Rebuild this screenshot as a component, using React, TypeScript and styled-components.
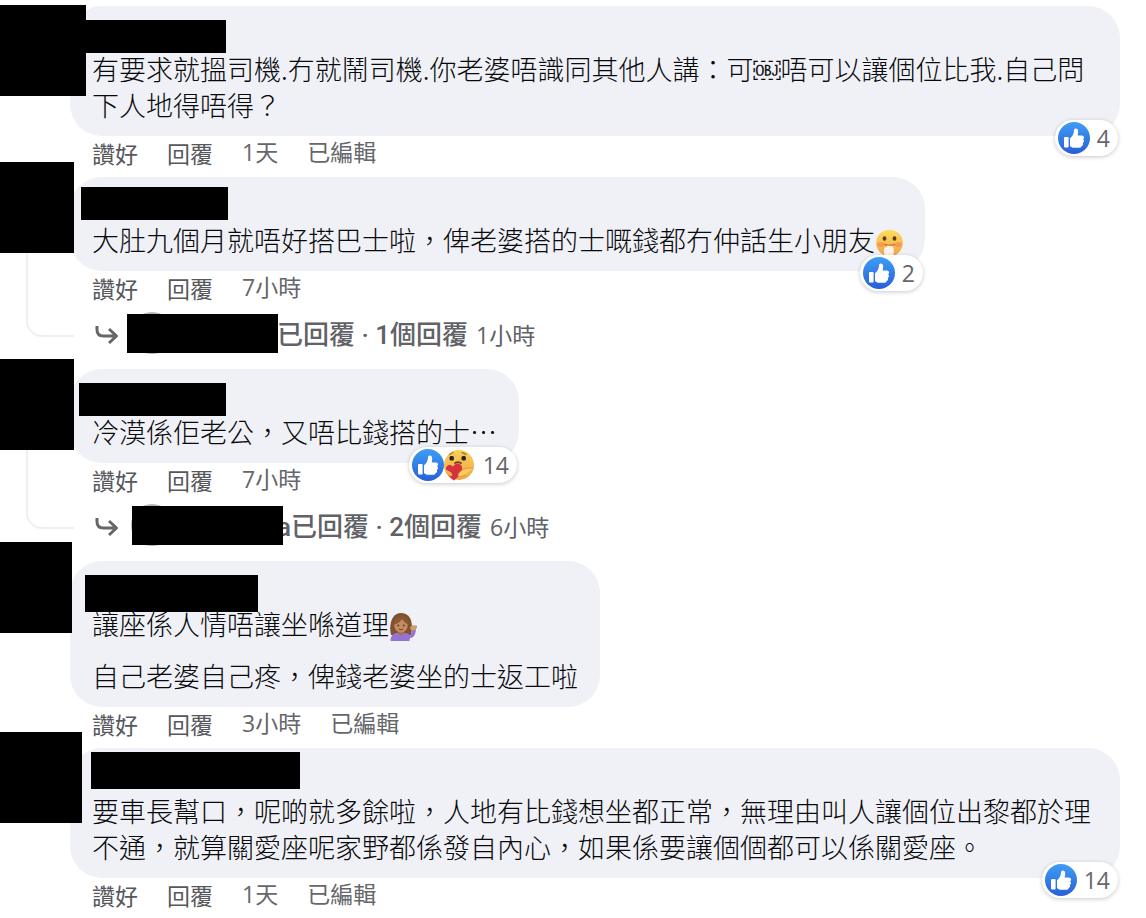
import React from "react";
import styled, { createGlobalStyle } from "styled-components";

const GlobalStyle = createGlobalStyle`
  *, *::before, *::after { box-sizing: border-box; }
  body {
    margin: 0;
    background: #fff;
    color: #08090c;
    font-family: "Open Sans", "Noto Sans CJK TC", sans-serif;
  }
  button { margin: 0; padding: 0; border: 0; background: none; font: inherit; color: inherit; cursor: pointer; }
  p { margin: 0; }
`;

const List = styled.ul`
  display: flex;
  flex-direction: column;
  gap: 6px;
  margin: 0;
  padding: 6px 26px 0 0;
  list-style: none;
`;

const Item = styled.li`
  display: grid;
  grid-template-columns: 70px minmax(0, 1fr);
`;

const Rail = styled.div`
  position: relative;
  z-index: 1;
  display: flex;
  flex-direction: column;
`;

const Avatar = styled.div<{ $width: number; $lift: number }>`
  width: ${(p) => p.$width}px;
  height: 91px;
  margin-top: -${(p) => p.$lift}px;
  background: #000;
`;

const Connector = styled.div`
  flex: 1;
  width: 48px;
  margin: 0 0 26px 26px;
  border: solid #eef0f4;
  border-width: 0 0 2px 2px;
  border-bottom-left-radius: 16px;
`;

const Body = styled.div`
  min-width: 0;
`;

const Bubble = styled.article`
  position: relative;
  width: fit-content;
  max-width: 100%;
  padding-bottom: 13px;
  border-radius: 32px;
  background: #f0f1f6;
`;

const Header = styled.header`
  position: relative;
  z-index: 1;
  display: flex;
  align-items: flex-start;
  height: 45px;
`;

const NameBar = styled.div<{ $left: number; $top: number; $width: number; $height: number }>`
  width: ${(p) => p.$width}px;
  height: ${(p) => p.$height}px;
  margin: ${(p) => p.$top}px 0 0 ${(p) => p.$left}px;
  background: #000;
`;

const Message = styled.div`
  display: flex;
  flex-direction: column;
  gap: 16px;
  padding: 0 22px;
  font-family: "Noto Sans CJK TC", sans-serif;
  font-size: 27px;
  font-weight: 300;
  line-height: 36px;
`;

const Emoji = styled.svg`
  width: 28px;
  height: 28px;
  margin: -4px 0 -6px;
  vertical-align: baseline;
`;

const Badge = styled.button`
  position: absolute;
  right: 2px;
  bottom: -20px;
  z-index: 2;
  display: flex;
  align-items: center;
  height: 36px;
  padding: 0 8px 0 3px;
  border-radius: 18px;
  background: #fff;
  box-shadow: 0 1px 4px rgba(0, 0, 0, 0.22);
`;

const Count = styled.span`
  margin-left: 7px;
  color: #65676b;
  font-size: 23px;
  line-height: 36px;
`;

const Reaction = styled.svg`
  width: 32px;
  height: 32px;
`;

const Actions = styled.div`
  display: flex;
  gap: 29px;
  height: 35px;
  padding-left: 22px;
  color: #65676b;
  font-size: 23px;
  line-height: 32px;
`;

const Action = styled.button`
  color: #56585d;
`;

const Thread = styled.div`
  position: relative;
  display: flex;
  align-items: center;
  height: 57px;
  padding-left: 24px;
  color: #606267;
`;

const ThreadArrow = styled.svg`
  width: 26px;
  height: 26px;
  margin-right: 11px;
`;

const ThreadAvatar = styled.span`
  width: 42px;
  height: 42px;
  margin: 0 104px 4px 0;
  border-radius: 50%;
  background: #b5b6b9;
`;

const ThreadCover = styled.span<{ $left: number }>`
  position: absolute;
  left: ${(p) => p.$left}px;
  top: 8px;
  width: 151px;
  height: 39px;
  background: #000;
`;

const ThreadLink = styled.button`
  font-family: Roboto, "Noto Sans CJK TC", sans-serif;
  font-size: 26px;
  font-weight: 500;
  line-height: 36px;
`;

const ThreadTime = styled.span`
  margin-left: 8px;
  font-size: 23px;
  line-height: 36px;
`;

const LikeIcon = ({ id }: { id: string }) => (
  <Reaction viewBox="0 0 32 32" aria-hidden="true">
    <defs>
      <linearGradient id={id} x1="0" y1="0" x2="0" y2="1">
        <stop offset="0" stopColor="#3f9df5" />
        <stop offset="1" stopColor="#285fd8" />
      </linearGradient>
    </defs>
    <circle cx="16" cy="16" r="16" fill={`url(#${id})`} />
    <rect x="6" y="15" width="4.6" height="10.5" rx="1" fill="#fff" />
    <path
      d="M12 24V16.200C14.400 14.400 15.800 12 16 8.400c0-1.300.7-2 1.800-2 1.800 0 2.500 1.700 2.400 3.700-.1 1.300-.3 2.400-.6 3.400h4.200c1.400 0 2.300 1 2.300 2.100 0 .8-.4 1.400-1 1.800.7.4 1 1.100.9 1.900-.1.800-.6 1.400-1.300 1.700.4.500.5 1 .4 1.600-.2.8-.8 1.300-1.500 1.500-.1 1.200-.8 1.700-1.900 1.700H16c-1.600 0-2.900-.6-4-1.800Z"
      fill="#fff"
    />
  </Reaction>
);

const CareIcon = () => (
  <Reaction viewBox="0 0 32 32" aria-hidden="true">
    <defs>
      <linearGradient id="care-face" x1="0" y1="0" x2="0" y2="1">
        <stop offset="0" stopColor="#f9cf59" />
        <stop offset="1" stopColor="#efa64b" />
      </linearGradient>
    </defs>
    <circle cx="15" cy="16" r="15" fill="url(#care-face)" />
    <path d="M5.500 5.500 9 3.500M18 3.500l4 2" stroke="#b97a2c" strokeWidth="1.400" strokeLinecap="round" />
    <rect x="5.500" y="7" width="4.400" height="4.400" rx="1.500" fill="#292522" />
    <rect x="17.500" y="7" width="4.400" height="4.400" rx="1.500" fill="#292522" />
    <path d="M11 14q3-1.500 6 0" stroke="#76431d" strokeWidth="1.800" fill="none" strokeLinecap="round" />
    <path
      d="M10 31.500C5 28.500 1.500 24 2 19.500c.4-3.700 4.500-5 7-1.700 1.200-3.600 7-4.300 8.700-.6 1.900 4.300-2.500 10.500-7.700 14.300Z"
      fill="#d5313f"
    />
    <path
      d="M1 20.500c2.500.2 5.500 2.200 7 4.500 1 1.700-.5 2.800-2.200 2L2 24.500"
      fill="#f4b34d"
    />
    <path
      d="M29 19c-6-.5-10.500 1-13.500 4.500-2.500 2.500-1 5 1.800 4l4.200-1.500"
      fill="#f9cc5a"
      stroke="#dc963d"
      strokeWidth="1"
      strokeLinecap="round"
    />
  </Reaction>
);

const GiggleEmoji = () => (
  <Emoji viewBox="0 0 28 28" role="img" aria-label="掩嘴笑">
    <defs>
      <linearGradient id="giggle-face" x1="0" y1="0" x2="0" y2="1">
        <stop offset="0" stopColor="#fddd5e" />
        <stop offset="1" stopColor="#f4a04a" />
      </linearGradient>
    </defs>
    <circle cx="14.500" cy="14" r="13.300" fill="url(#giggle-face)" />
    <ellipse cx="5.800" cy="15.500" rx="3.600" ry="2.600" fill="#f37352" opacity=".45" />
    <ellipse cx="23.200" cy="15.500" rx="3.600" ry="2.600" fill="#f37352" opacity=".45" />
    <ellipse cx="9.500" cy="9.500" rx="1.900" ry="2.300" fill="#574019" />
    <ellipse cx="19.500" cy="9.500" rx="1.900" ry="2.300" fill="#574019" />
    <path d="M9.500 15.500q5 1.500 10 0" stroke="#c9803c" strokeWidth="1.500" fill="none" strokeLinecap="round" />
    <path
      d="M10 27c-1.300-2.500-1.500-5.500-.6-8 .3-1 1.500-1 1.900-.2l.9-1.800c.5-.9 1.700-.7 2 .2.700-.9 1.800-.6 2.100.4.900-.5 1.900 0 2.100 1 .9 2.500.6 5.900-.8 8.400Z"
      fill="#fdf3e6"
    />
  </Emoji>
);

const TippingHandEmoji = () => (
  <Emoji viewBox="0 0 28 28" role="img" aria-label="攤手女士">
    <path d="M2 22C-.500 11 3 0 12 0s13 9 10 22Z" fill="#80522f" />
    <path d="M1.500 28c0-6 3.500-8.500 10.500-8.500 5 0 7.500 1 9.500 3l2.500-7 3 1c-.5 5-2.500 8.500-6 8.500l-.5 3Z" fill="#9673d2" />
    <path d="M9.500 17h5v4.500q-2.500 1.500-5 0Z" fill="#a96f49" />
    <ellipse cx="12" cy="12" rx="6.800" ry="7.600" fill="#c58b61" />
    <path d="M4.500 12C5 6 8 4 12.500 3.500 17 4 19.500 7 19.500 12 17 10.500 14 8 13 6c-1.500 3-5 5-8.500 6Z" fill="#8b592f" />
    <circle cx="9.300" cy="12.500" r=".9" fill="#5a3a26" />
    <circle cx="14.900" cy="12.500" r=".9" fill="#5a3a26" />
    <path d="M10 16q2 1.300 4 0" stroke="#8d3d31" strokeWidth="1.200" fill="none" />
    <path d="M21.500 16.500c-1-2 .5-4 2-4.200l4.500.2v2.300l-2.500 2.700Z" fill="#d19a70" />
  </Emoji>
);

interface CommentData {
  id: string;
  avatar: { width: number; lift: number };
  name: { left: number; top: number; width: number; height: number };
  paragraphs: React.ReactNode[];
  time: string;
  edited?: boolean;
  likes?: number;
  care?: boolean;
  thread?: { coverLeft: number; label: string; tail?: string; time: string };
}

const comments: CommentData[] = [
  {
    id: "c1",
    avatar: { width: 86, lift: 1 },
    name: { left: 15, top: 14, width: 141, height: 33 },
    paragraphs: ["有要求就搵司機.冇就鬧司機.你老婆唔識同其他人講：可\uFFFC唔可以讓個位比我.自己問下人地得唔得？"],
    time: "1天",
    edited: true,
    likes: 4,
  },
  {
    id: "c2",
    avatar: { width: 74, lift: 15 },
    name: { left: 11, top: 10, width: 147, height: 33 },
    paragraphs: [<>大肚九個月就唔好搭巴士啦，俾老婆搭的士嘅錢都冇仲話生小朋友<GiggleEmoji /></>],
    time: "7小時",
    likes: 2,
    thread: { coverLeft: 57, label: "已回覆 · 1個回覆", time: "1小時" },
  },
  {
    id: "c3",
    avatar: { width: 74, lift: 10 },
    name: { left: 9, top: 14, width: 147, height: 33 },
    paragraphs: ["冷漠係佢老公，又唔比錢搭的士⋯"],
    time: "7小時",
    likes: 14,
    care: true,
    thread: { coverLeft: 62, label: "已回覆 · 2個回覆", tail: "a", time: "6小時" },
  },
  {
    id: "c4",
    avatar: { width: 72, lift: 19 },
    name: { left: 15, top: 14, width: 173, height: 37 },
    paragraphs: [<>讓座係人情唔讓坐喺道理<TippingHandEmoji /></>, "自己老婆自己疼，俾錢老婆坐的士返工啦"],
    time: "3小時",
    edited: true,
  },
  {
    id: "c5",
    avatar: { width: 82, lift: 16 },
    name: { left: 21, top: 4, width: 209, height: 37 },
    paragraphs: ["要車長幫口，呢啲就多餘啦，人地有比錢想坐都正常，無理由叫人讓個位出黎都於理不通，就算關愛座呢家野都係發自內心，如果係要讓個個都可以係關愛座。"],
    time: "1天",
    edited: true,
    likes: 14,
  },
];

const Comment = ({ data }: { data: CommentData }) => (
  <Item>
    <Rail>
      <Avatar $width={data.avatar.width} $lift={data.avatar.lift} />
      {data.thread && <Connector />}
    </Rail>
    <Body>
      <Bubble>
        <Header>
          <NameBar $left={data.name.left} $top={data.name.top} $width={data.name.width} $height={data.name.height} />
        </Header>
        <Message>
          {data.paragraphs.map((text, i) => (
            <p key={i}>{text}</p>
          ))}
        </Message>
        {data.likes && (
          <Badge type="button">
            <LikeIcon id={`like-${data.id}`} />
            {data.care && <CareIcon />}
            <Count>{data.likes}</Count>
          </Badge>
        )}
      </Bubble>
      <Actions>
        <Action type="button">讚好</Action>
        <Action type="button">回覆</Action>
        <span>{data.time}</span>
        {data.edited && <span>已編輯</span>}
      </Actions>
      {data.thread && (
        <Thread>
          <ThreadArrow viewBox="0 0 26 26" aria-hidden="true">
            <path
              d="M3 4v3.500q0 6.500 6.500 6.500H22M15 7l7.500 7-7.500 7"
              fill="none"
              stroke="#65676b"
              strokeWidth="3"
              strokeLinejoin="round"
            />
          </ThreadArrow>
          <ThreadAvatar />
          <ThreadLink type="button">
            {data.thread.tail}
            {data.thread.label}
          </ThreadLink>
          <ThreadTime>{data.thread.time}</ThreadTime>
          <ThreadCover $left={data.thread.coverLeft} />
        </Thread>
      )}
    </Body>
  </Item>
);

export default function App() {
  return (
    <>
      <GlobalStyle />
      <main>
        <List>
          {comments.map((c) => (
            <Comment key={c.id} data={c} />
          ))}
        </List>
      </main>
    </>
  );
}
